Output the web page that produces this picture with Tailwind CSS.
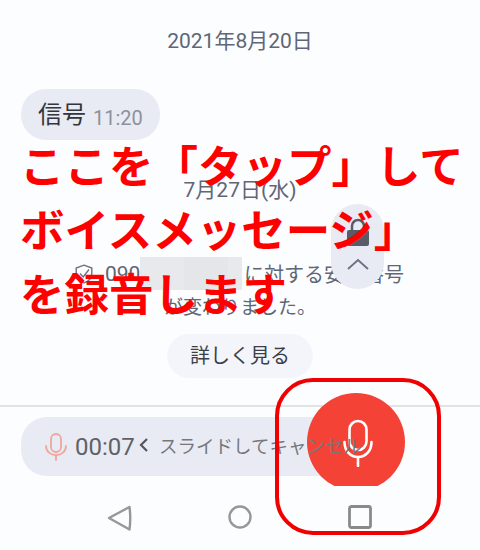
<!DOCTYPE html>
<html lang="ja">
<head>
    <meta charset="UTF-8">
    <title>ボイスメッセージ</title>
    <script src="https://cdn.jsdelivr.net/npm/@tailwindcss/browser@4"></script>
</head>
<body class="bg-[#fcfdff] font-['Roboto','Noto_Sans_CJK_JP',sans-serif]">
    <div class="relative w-[480px] h-[550px] overflow-hidden flex flex-col">
        <!-- chat -->
        <div class="h-[405px] flex flex-col shrink-0">
            <p class="mt-[28px] h-[26px] leading-[26px] text-center text-[21px] text-[#5f6675]">2021年8月20日</p>
            <div class="mt-[35px] ml-[21px] w-[139px] h-[51px] rounded-[25px] bg-[#e8ebf3] flex items-center pl-[17px]">
                <span class="text-[24px] text-[#33363d]">信号</span>
                <span class="ml-[7px] mt-[6px] text-[20px] text-[#8d919b]">11:20</span>
            </div>
            <p class="mt-[37px] h-[26px] leading-[26px] text-center text-[21px] text-[#5f6675]">7月27日(水)</p>
            <div class="mt-[54px] ml-[75px] h-[33px] flex items-center text-[20px] text-[#5f6675]">
                <svg class="w-[18px] h-[20px] mr-[12px] shrink-0" viewBox="0 0 18 20" fill="none" stroke="#6b7180" stroke-width="1.400">
                    <path d="M9 1.200 16.800 4v5.500c0 4.500-3.200 7.700-7.800 9.300C4.400 17.200 1.200 14 1.200 9.500V4Z"/>
                    <path d="M5 9.500 8.200 13 14 5.500"/>
                </svg>
                <span class="w-[35px] mt-[2px] text-[21px] shrink-0">090</span>
                <div class="w-[102px] h-[33px] flex shrink-0">
                    <div class="w-[44px] bg-[#e8e9ed]"></div>
                    <div class="w-[44px] bg-[#e5e6ea]"></div>
                    <div class="w-[14px] bg-[#e8e9ed]"></div>
                </div>
                <span class="ml-[2px] mt-[2px] whitespace-nowrap">に対する安全番号</span>
            </div>
            <p class="mt-[5px] h-[26px] leading-[26px] text-center text-[19px] text-[#5f6675]">が変わりました。</p>
            <div class="mt-[13px] mx-auto w-[146px] h-[44px] rounded-[22px] bg-[#f3f5fa] flex items-center justify-center text-[20px] text-[#3c3f46]">詳しく見る</div>
        </div>

        <!-- input bar -->
        <div class="border-t-2 border-[#e3e3e3] h-[81px] shrink-0 pt-[10px] pl-[21px]">
            <div class="w-[310px] h-[59px] rounded-l-[26px] bg-[#e8ebf3] flex items-center pl-[24px]">
                <svg class="w-[22px] h-[28px] shrink-0" viewBox="0 0 22 28" fill="none" stroke="#eea79f" stroke-width="1.800" stroke-linecap="round">
                    <rect x="6" y="1" width="10" height="18" rx="5"/>
                    <path d="M1 13c0 5.500 4.500 9 10 9s10-3.500 10-9M11 22v5"/>
                </svg>
                <span class="ml-[8px] text-[24px] text-[#606166]">00:07</span>
                <svg class="w-[9px] h-[16px] ml-[4px] mb-[4px] shrink-0" viewBox="0 0 9 16" fill="none" stroke="#55565a" stroke-width="2.200">
                    <path d="M8 2 2 8l6 6"/>
                </svg>
            </div>
        </div>

        <!-- nav bar -->
        <div class="flex-1 relative flex items-center">
            <div class="w-full flex justify-between pl-[107px] pr-[108px]">
                <svg class="w-[25px] h-[26px]" viewBox="0 0 25 26" fill="none" stroke="#979797" stroke-width="2.400" stroke-linejoin="round">
                    <path d="M22.500 2 2 13l20.500 11.500Q24 13 22.500 2Z"/>
                </svg>
                <svg class="w-[24px] h-[24px]" viewBox="0 0 24 24" fill="none" stroke="#979797" stroke-width="2.400">
                    <circle cx="12" cy="12" r="10.500"/>
                </svg>
                <svg class="w-[24px] h-[24px]" viewBox="0 0 24 24" fill="none" stroke="#8a8a8a" stroke-width="2.800">
                    <rect x="1.500" y="1.500" width="21" height="21" rx="2"/>
                </svg>
            </div>
        </div>

        <!-- lock slider -->
        <div class="absolute left-[331px] top-[204px] w-[53px] h-[85px] rounded-[27px] bg-[#e8ebf3] flex flex-col items-center pt-[14px]">
            <svg class="w-[24px] h-[29px]" viewBox="0 0 24 29" fill="none">
                <path d="M6 13V8a6 6 0 0 1 12 0v5" stroke="#585c68" stroke-width="2.500"/>
                <rect x="1" y="12" width="22" height="16" rx="2" fill="#585c68"/>
            </svg>
            <svg class="w-[22px] h-[12px] mt-[11px]" viewBox="0 0 22 12" fill="none" stroke="#6b7180" stroke-width="1.800">
                <path d="M1 11 11 2l10 9"/>
            </svg>
        </div>

        <!-- record button -->
        <div class="absolute left-[307px] top-[393px] w-[98px] h-[93px] overflow-hidden">
            <div class="w-[98px] h-[98px] rounded-full bg-[#f44336]"></div>
        </div>
        <svg class="absolute left-[343px] top-[419px] w-[30px] h-[48px]" viewBox="0 0 30 48" fill="none" stroke="#ffffff" stroke-width="2.600" stroke-linecap="round">
            <rect x="6.500" y="2" width="17" height="29" rx="8.500"/>
            <path d="M1.500 23c0 9 6 15 13.500 15s13.500-6 13.500-15M15 38v9"/>
        </svg>
        <span class="absolute left-[159px] top-[434px] text-[18.500px] leading-[26px] text-[#77787c] whitespace-nowrap">スライドしてキャンセル</span>

        <!-- annotation -->
        <div class="absolute left-[20px] top-[136px] text-[44.500px] leading-[64px] font-bold text-[#ff0000] whitespace-nowrap">
            <p>ここを「タップ」して</p>
            <p>ボイスメッセージ」</p>
            <p>を録音します</p>
        </div>
        <div class="absolute left-[275px] top-[378px] w-[166px] h-[157px] rounded-[38px] border-[4px] border-[#f00000]"></div>
    </div>
</body>
</html>
